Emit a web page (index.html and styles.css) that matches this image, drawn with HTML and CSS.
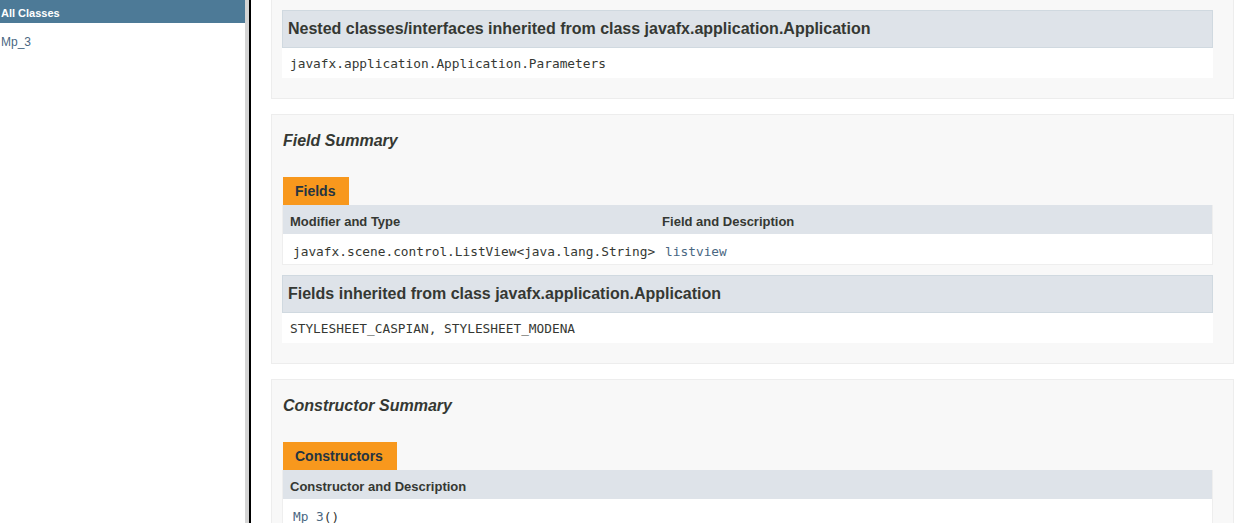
FILE: index.html
```html
<!DOCTYPE html>
<html>
<head>
<meta charset="utf-8">
<link rel="stylesheet" href="styles.css">
</head>
<body>
<div class="frameset">
  <nav class="left-frame">
    <h1 class="bar">All Classes</h1>
    <ul class="class-list">
      <li><a href="#">Mp_3</a></li>
    </ul>
  </nav>
  <div class="divider"></div>
  <main class="right-frame">
    <section class="block block-first">
      <div class="inherited">
        <h4 class="inherited-title">Nested classes/interfaces inherited from class javafx.application.Application</h4>
        <code class="mono">javafx.application.Application.Parameters</code>
      </div>
    </section>

    <section class="block">
      <h3 class="block-title">Field Summary</h3>
      <table class="summary">
        <caption><span class="tab">Fields</span></caption>
        <tr>
          <th class="col-first">Modifier and Type</th>
          <th class="col-last">Field and Description</th>
        </tr>
        <tr>
          <td class="col-first"><code class="mono">javafx.scene.control.ListView&lt;java.lang.String&gt;</code></td>
          <td class="col-last"><code class="mono"><a href="#">listview</a></code></td>
        </tr>
      </table>
      <div class="inherited inherited-after">
        <h4 class="inherited-title">Fields inherited from class javafx.application.Application</h4>
        <code class="mono">STYLESHEET_CASPIAN, STYLESHEET_MODENA</code>
      </div>
    </section>

    <section class="block">
      <h3 class="block-title">Constructor Summary</h3>
      <table class="summary">
        <caption><span class="tab">Constructors</span></caption>
        <tr>
          <th class="col-last">Constructor and Description</th>
        </tr>
        <tr>
          <td class="col-last"><code class="mono"><a href="#">Mp_3</a>()</code></td>
        </tr>
      </table>
    </section>
  </main>
</div>
</body>
</html>
```

FILE: styles.css
```css
html, body {
  margin: 0;
  padding: 0;
  height: 523px;
  overflow: hidden;
  background: #ffffff;
}

body {
  color: #353833;
  font-family: "Liberation Sans", Arial, Helvetica, sans-serif;
  font-size: 14px;
}

a {
  color: #4a6782;
  text-decoration: none;
}

.frameset {
  display: flex;
  height: 523px;
}

.left-frame {
  width: 245px;
  flex: none;
  background: #ffffff;
}

.bar {
  margin: 0;
  height: 20px;
  padding: 3px 0 0 1px;
  line-height: 20px;
  background: #4d7a97;
  color: #ffffff;
  font-size: 11px;
  font-weight: bold;
}

.class-list {
  list-style: none;
  margin: 0;
  padding: 11px 0 0 1px;
  font-size: 12px;
  line-height: 16px;
}

.divider {
  flex: none;
  width: 4px;
  background: #d4d4d4;
  border-right: 2px solid #000000;
}

.right-frame {
  flex: 1;
  min-width: 0;
  padding: 0 5px 0 20px;
  overflow: hidden;
}

.mono {
  font-family: "DejaVu Sans Mono", monospace;
  font-size: 12.8px;
}

.block {
  border: 1px solid #ededed;
  background: #f8f8f8;
  padding: 0 20px 5px 10px;
  margin-bottom: 15px;
}

.block-first {
  border-top: none;
  padding-top: 10px;
}

.block-title {
  margin: 15px 0;
  padding: 0 0 0 1px;
  font-size: 16px;
  line-height: 22px;
  font-style: italic;
  font-weight: bold;
  color: #353833;
}

.inherited {
  background: #ffffff;
  padding: 0 0 5px 8px;
  margin-bottom: 15px;
}

.inherited-after {
  margin-top: 10px;
}

.inherited-title {
  margin: 0 0 6px -8px;
  padding: 7px 5px;
  background: #dee3e9;
  border: 1px solid #d0d9e0;
  font-size: 16px;
  line-height: 22px;
  font-weight: bold;
  color: #353833;
}

.inherited .mono {
  display: block;
  line-height: 19px;
}

.summary {
  width: 100%;
  border-spacing: 0;
  border-left: 1px solid #eeeeee;
  border-right: 1px solid #eeeeee;
  border-bottom: 1px solid #eeeeee;
}

.summary caption {
  text-align: left;
  padding: 10px 0 0 1px;
  color: #253441;
  font-weight: bold;
}

.tab {
  display: inline-block;
  vertical-align: top;
  height: 16px;
  line-height: 16px;
  padding: 6px 14px 6px 12px;
  background: #f8981d;
  font-size: 14px;
  white-space: nowrap;
}

.summary th {
  background: #dee3e9;
  text-align: left;
  padding: 8px 3px 3px 7px;
  font-size: 13px;
  line-height: 18px;
  font-weight: bold;
  color: #353833;
}

.summary td {
  background: #ffffff;
  padding: 8px 3px 3px 10px;
  line-height: 18px;
  vertical-align: top;
}

.summary td.col-first {
  padding-right: 0;
}

.summary .col-first {
  white-space: nowrap;
}

.summary .col-last {
  width: 100%;
}
```
